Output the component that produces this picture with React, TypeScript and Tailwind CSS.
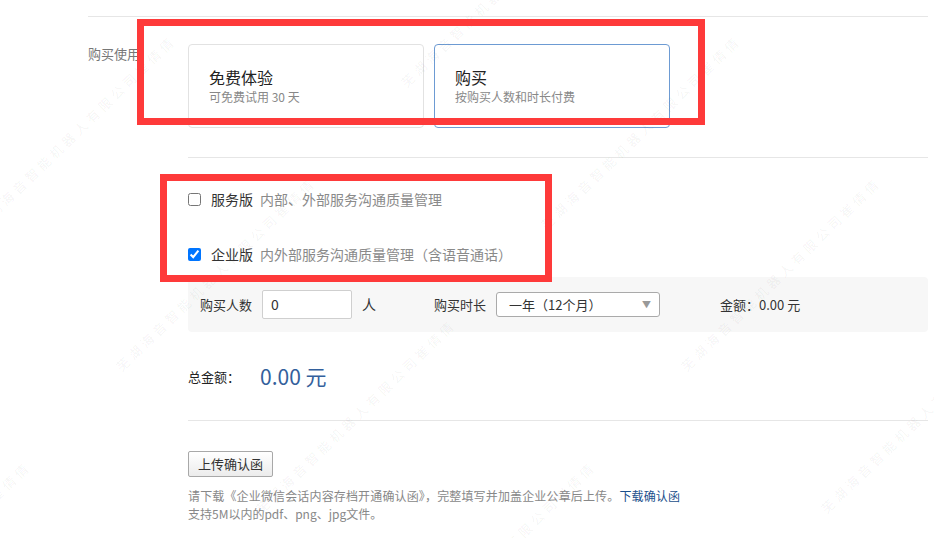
import React from "react";

const WATERMARK = "芜湖海音智能机器人有限公司崔倩倩";

// tiled watermark anchors (bottom-left of each line)
const marks: { x: number; y: number }[] = [];
for (let k = -2; k <= 4; k++) {
  for (let m = -1; m <= 2; m++) {
    const x = -17 + 140 * k + 565 * m;
    const y = 232 + 142 * k;
    if (x > -300 && x < 934 && y > -20 && y < 820) marks.push({ x, y });
  }
}

function Watermark() {
  return (
    <div className="pointer-events-none absolute inset-0 overflow-hidden">
      {marks.map((p, i) => (
        <span
          key={i}
          className="absolute origin-bottom-left -rotate-[44deg] whitespace-nowrap text-[13px] leading-[14px] tracking-[4px] text-black/[0.055]"
          style={{ left: p.x, top: p.y - 14 }}
        >
          {WATERMARK}
        </span>
      ))}
    </div>
  );
}

function PlanCard({ title, desc, active }: { title: string; desc: string; active?: boolean }) {
  return (
    <div
      className={`flex h-[84px] w-[236px] flex-col justify-center rounded-[4px] border pl-5 ${
        active ? "border-[#6d9bd3]" : "border-[#e2e2e2]"
      }`}
    >
      <div className="text-[16px] leading-[22px] text-[#222]">{title}</div>
      <div className="text-[12px] leading-[18px] text-[#888]">{desc}</div>
    </div>
  );
}

function EditionRow({ name, desc, checked }: { name: string; desc: string; checked?: boolean }) {
  return (
    <label className="flex h-5 items-center">
      <input type="checkbox" defaultChecked={checked} className="m-0 h-[13px] w-[13px]" />
      <span className="ml-[10px] text-[14px] text-[#333]">{name}</span>
      <span className="ml-[7px] text-[14px] text-[#8a8a8a]">{desc}</span>
    </label>
  );
}

export default function App() {
  return (
    <div className="relative h-[538px] w-[934px] overflow-hidden bg-white font-['Noto_Sans_CJK_SC','Noto_Sans',sans-serif] text-[#333]">
      <div className="pl-[88px] pr-[6px] pt-4">
        <div className="border-t border-[#e6e6e6]" />

        {/* purchase type */}
        <div className="mt-[27px] flex">
          <div className="w-[100px] text-[13px] leading-5 text-[#777]">购买使用</div>
          <div className="flex gap-[10px]">
            <PlanCard title="免费体验" desc="可免费试用 30 天" />
            <PlanCard title="购买" desc="按购买人数和时长付费" active />
          </div>
        </div>

        <div className="ml-[100px] mt-[29px] border-t border-[#e6e6e6]" />

        <div className="ml-[100px]">
          {/* editions */}
          <div className="mt-[31px] flex flex-col gap-[35px]">
            <EditionRow name="服务版" desc="内部、外部服务沟通质量管理" />
            <EditionRow name="企业版" desc="内外部服务沟通质量管理（含语音通话）" checked />
          </div>

          {/* quantity panel */}
          <div className="mt-[13px] flex h-[55px] items-center rounded-[4px] bg-[#f7f7f7] pl-3 text-[13px] text-[#333]">
            <span>购买人数</span>
            <div className="ml-[10px] flex h-[29px] w-[90px] items-center rounded-[2px] border border-[#cfcfcf] bg-white pl-2 text-[14px]">
              0
            </div>
            <span className="ml-[10px] text-[14px]">人</span>
            <span className="ml-[58px]">购买时长</span>
            <div className="ml-[10px] flex h-[25px] w-[164px] items-center justify-between rounded-[3px] border border-[#aaa] bg-white pl-3 pr-2 text-[13px]">
              <span>一年（12个月）</span>
              <span className="text-[9px] text-[#999]">▼</span>
            </div>
            <span className="ml-[60px]">金额：0.00 元</span>
          </div>

          {/* total */}
          <div className="mt-[30px] flex h-[30px] items-center">
            <span className="w-[72px] text-[13px] text-[#222]">总金额：</span>
            <span className="text-[21px] text-[#33609c]">0.00 元</span>
          </div>

          <div className="mt-[28px] border-t border-[#e6e6e6]" />

          {/* upload */}
          <button
            type="button"
            className="mt-[30px] h-[26px] w-[85px] rounded-[2px] border border-[#a8a8a8] bg-gradient-to-b from-white to-[#ececec] text-[13px] text-[#333]"
          >
            上传确认函
          </button>
          <div className="mt-[10px] text-[12px] leading-[18px] text-[#888]">
            <div className="tracking-[0.15px]">
              请下载《企业微信会话内容存档开通确认函》，完整填写并加盖企业公章后上传。
              <span className="text-[#1b4f8c]">下载确认函</span>
            </div>
            <div>支持5M以内的pdf、png、jpg文件。</div>
          </div>
        </div>
      </div>

      <Watermark />

      {/* annotation boxes */}
      <div className="pointer-events-none absolute left-[137px] top-[19px] h-[106px] w-[568px] border-[7px] border-[#fe3a3a]" />
      <div className="pointer-events-none absolute left-[160px] top-[174px] h-[108px] w-[392px] border-[7px] border-[#fe3a3a]" />
    </div>
  );
}
